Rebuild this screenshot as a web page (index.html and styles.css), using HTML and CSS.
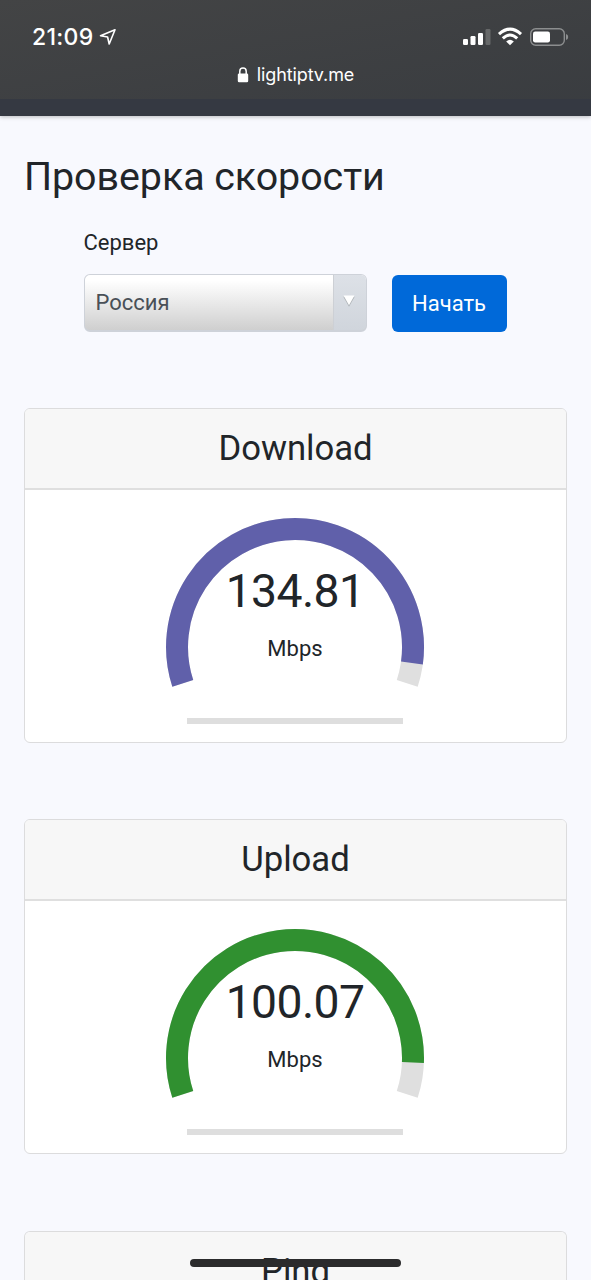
FILE: index.html
```html
<!DOCTYPE html>
<html lang="ru">
<head>
<meta charset="utf-8">
<title>Проверка скорости</title>
<link rel="stylesheet" href="styles.css">
</head>
<body>
<header class="browser">
  <div class="status">
    <span class="time">21:09</span>
    <svg class="arrow" width="18" height="18" viewBox="0 0 18 18"><path d="M16 1.8 1.5 7.7 8.6 9 10.2 16Z" fill="none" stroke="#fff" stroke-width="1.6" stroke-linejoin="round"/></svg>
    <svg class="signals" width="110" height="24" viewBox="0 0 110 24">
      <g fill="#fff"><rect x="1" y="14" width="5" height="6" rx="1.2"/><rect x="8.5" y="11" width="5" height="9" rx="1.2"/><rect x="16" y="8" width="5" height="12" rx="1.2"/></g>
      <rect x="23.5" y="4" width="5" height="16" rx="1.2" fill="#666869"/>
      <g fill="none" stroke="#fff" stroke-width="3.1"><path d="M37 9.1Q48 -.9 59 9.1"/><path d="M40.8 13.3Q48 6.7 55.2 13.3"/></g>
      <path d="M44.2 16.4Q48 13.2 51.8 16.4L48 20.3Z" fill="#fff"/>
      <rect x="68.7" y="3.7" width="33.6" height="16.6" rx="5" fill="none" stroke="#8c8e8f" stroke-width="1.4"/>
      <rect x="71" y="6.5" width="17" height="11" rx="2.2" fill="#fff"/>
      <path d="M104 9Q106.2 9.7 106.2 12T104 15Z" fill="#8c8e8f"/>
    </svg>
  </div>
  <div class="address">
    <svg width="12" height="16" viewBox="0 0 12 16"><path d="M2.8 7V4.3a3.2 3.2 0 0 1 6.4 0V7" fill="none" stroke="#fff" stroke-width="1.5"/><rect x=".8" y="6.5" width="10.4" height="8.7" rx="1.3" fill="#fff"/></svg>
    <span class="host">lightiptv.me</span>
  </div>
</header>
<main class="page">
  <h1 class="title">Проверка скорости</h1>
  <form class="controls">
    <label class="label">Сервер</label>
    <div class="row">
      <div class="select"><span class="choice">Россия</span><span class="drop"><svg width="12" height="12" viewBox="0 0 12 12"><path d="M.3 1.8h11.4L6 11.8Z" fill="#aeb3b7"/><path d="M.5 .5h11L6 10.3Z" fill="#fff"/></svg></span></div>
      <button class="start" type="button">Начать</button>
    </div>
  </form>
  <section class="card">
    <h2 class="heading">Download</h2>
    <div class="body">
      <div class="gauge">
        <svg class="dial" width="260" height="172" viewBox="0 0 260 172" fill="none" stroke-width="22">
          <path d="M17.78 166.46A118 118 0 1 1 242.22 166.46" stroke="#dfdfdf"/>
          <path d="M17.78 166.46A118 118 0 1 1 246.94 145.99" stroke="#6060aa"/>
        </svg>
        <div class="reading"><span class="value">134.81</span><span class="unit">Mbps</span></div>
      </div>
      <div class="progress"></div>
    </div>
  </section>
  <section class="card">
    <h2 class="heading">Upload</h2>
    <div class="body">
      <div class="gauge">
        <svg class="dial" width="260" height="172" viewBox="0 0 260 172" fill="none" stroke-width="22">
          <path d="M17.78 166.46A118 118 0 1 1 242.22 166.46" stroke="#dfdfdf"/>
          <path d="M17.78 166.46A118 118 0 1 1 247.92 134.53" stroke="#309030"/>
        </svg>
        <div class="reading"><span class="value">100.07</span><span class="unit">Mbps</span></div>
      </div>
      <div class="progress"></div>
    </div>
  </section>
  <section class="card card-last">
    <h2 class="heading">Ping</h2>
  </section>
</main>
<div class="home"></div>
</body>
</html>
```
FILE: styles.css
```css
* { box-sizing: border-box; }
body {
  margin: 0;
  height: 1280px;
  overflow: hidden;
  position: relative;
  background: #f8f9fe;
  color: #212529;
  font-family: Roboto, sans-serif;
}
.browser {
  height: 116px;
  background: linear-gradient(#353942, #353942) 0 100% / 100% 17px no-repeat,
    linear-gradient(170deg, #434445, #393c40);
  box-shadow: 0 1px 4px rgba(0, 0, 0, .25);
  color: #fff;
  font-family: Inter, sans-serif;
}
.status {
  display: flex;
  align-items: center;
  height: 62px;
  padding: 12px 19px 0 32px;
}
.time { font-size: 23px; font-weight: 500; line-height: 28px; margin-top: -1px; letter-spacing: .3px; }
.arrow { margin-left: 5px; }
.signals { margin: 0 0 0 auto; }
.address {
  display: flex;
  align-items: center;
  justify-content: center;
  gap: 8px;
  height: 26px;
}
.host { font-size: 18px; line-height: 26px; letter-spacing: -.1px; }
.page { padding: 40px 24px 0; }
.title {
  margin: 0;
  font-size: 39.4px;
  font-weight: 400;
  line-height: 42px;
  letter-spacing: -.05px;
}
.controls { padding: 31px 59.5px 0; }
.label { display: block; font-size: 22px; line-height: 28px; }
.row { display: flex; align-items: flex-end; gap: 25px; margin-top: 17px; }
.select {
  display: flex;
  width: 283px;
  height: 58px;
  border: 1.5px solid #ced2d9;
  border-bottom-width: 2px;
  border-radius: 6px;
  background: linear-gradient(#fff 10%, #cfcfcf);
  overflow: hidden;
}
.choice {
  flex: 1;
  padding-left: 11px;
  font-size: 22px;
  line-height: 56px;
  color: #495057;
}
.drop {
  display: flex;
  align-items: center;
  justify-content: center;
  width: 33px;
  padding: 0 2px 4px 0;
  border-left: 1px solid #cdd0d5;
  background: linear-gradient(#dde1e7, #d0d5dc);
}
.start {
  width: 115px;
  height: 57px;
  padding: 0;
  border: 0;
  border-radius: 6px;
  background: #0069d9;
  color: #fff;
  font: 22px/55px Roboto, sans-serif;
}
.card {
  height: 335px;
  margin-top: 76px;
  border: 1.5px solid #dcdcdd;
  border-radius: 6px;
  background: #fff;
  overflow: hidden;
}
.card-last {
  height: 49px;
  margin-top: 77px;
  border-bottom: 0;
  border-radius: 6px 6px 0 0;
}
.heading {
  margin: 0;
  height: 81px;
  border-bottom: 2px solid #dfdfdf;
  background: #f7f7f7;
  font-size: 34.7px;
  font-weight: 400;
  line-height: 79px;
  letter-spacing: -.05px;
  text-align: center;
}
.body { display: flex; flex-direction: column; align-items: center; padding-top: 27px; }
.gauge { display: grid; width: 260px; height: 172px; margin-left: -1px; }
.dial, .reading { grid-area: 1 / 1; }
.reading { display: flex; flex-direction: column; align-items: center; padding-top: 46px; }
.value { font-size: 46.3px; line-height: 56px; letter-spacing: -.6px; }
.unit { margin-top: 16px; font-size: 22px; line-height: 28px; }
.progress { width: 216px; height: 6px; margin: 29px 1px 0 0; background: #dedede; }
.home {
  position: absolute;
  left: 190px;
  top: 1259px;
  width: 211px;
  height: 8px;
  border-radius: 4px;
  background: #2b2b2c;
}
```
